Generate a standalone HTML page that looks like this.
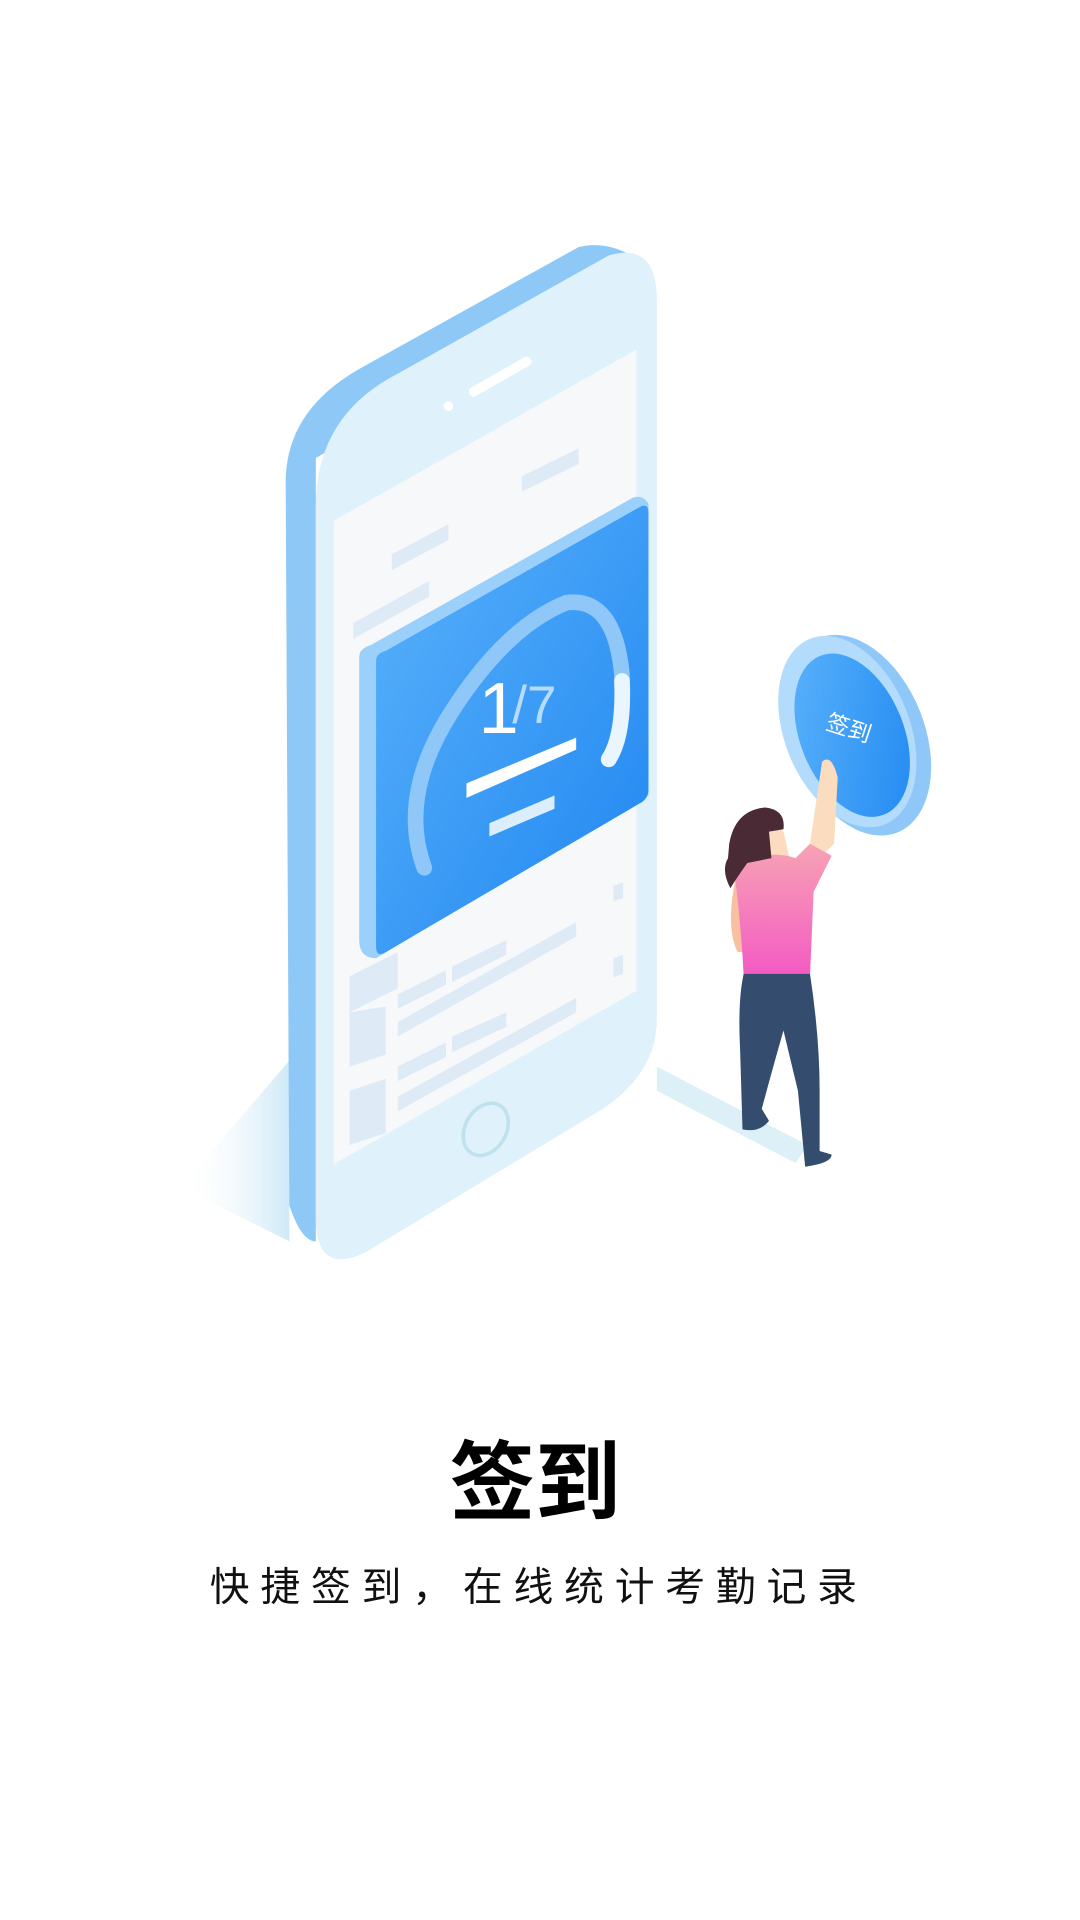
<!DOCTYPE html>
<html><head><meta charset="utf-8"><style>
html,body{margin:0;padding:0;background:#fff;width:1080px;height:1920px;overflow:hidden}
svg{display:block}
</style></head><body>
<svg width="1080" height="1920" viewBox="0 0 896 1593" xmlns="http://www.w3.org/2000/svg">
<defs>
<linearGradient id="card" x1="0" y1="0" x2="1" y2="1"><stop offset="0" stop-color="#5ab2fb"/><stop offset="1" stop-color="#1f86f0"/></linearGradient>
<linearGradient id="btn" x1="0" y1="0" x2="1" y2="1"><stop offset="0" stop-color="#5db4fb"/><stop offset="1" stop-color="#1f88f2"/></linearGradient>
<linearGradient id="shirt" x1="0" y1="0" x2="0" y2="1"><stop offset="0" stop-color="#f7a3b4"/><stop offset="1" stop-color="#f45ac3"/></linearGradient>
<linearGradient id="shadow" x1="1" y1="0" x2="0" y2="0"><stop offset="0" stop-color="#cfe9f7"/><stop offset="1" stop-color="#fff" stop-opacity="0"/></linearGradient>
</defs>
<path d="M240 880 L240 1030 L150 985 Z" fill="url(#shadow)"/>
<path d="M545 885 L670 950 L660 965 L545 905 Z" fill="#d4ecf6" opacity="0.8"/>
<path d="M237 400 Q237 340 300 305 L480 205 Q500 200 520 210 L520 230 L262 380 L262 1030 Q250 1030 240 1000 Z" fill="#8ec8f7"/>
<path d="M262 420 Q262 345 330 310 L505 212 Q545 200 545 250 L545 845 Q545 890 500 920 L305 1038 Q262 1060 262 1010 Z" fill="#dff1fb"/>
<path d="M277 432 L528 290 L528 822 L277 966 Z" fill="#f7f8fa"/>
<path d="M393 325 L437 300" stroke="#fff" stroke-width="8" stroke-linecap="round"/>
<circle cx="372" cy="337" r="4" fill="#fff"/>
<ellipse cx="403" cy="937" rx="17" ry="23" transform="rotate(30 403 937)" fill="none" stroke="#bfe2ef" stroke-width="3"/>
<g fill="#dfeaf7">
<path d="M433 395 L480 372 L480 385 L433 408 Z"/>
<path d="M325 460 L372 435 L372 448 L325 473 Z"/>
<path d="M293 517 L356 482 L356 495 L293 530 Z"/>
<path d="M290 810 L330 790 L330 820 L290 840 Z"/>
<path d="M375 802 L420 780 L420 792 L375 815 Z"/>
<path d="M330 825 L370 805 L370 817 L330 837 Z"/>
<path d="M330 848 L478 765 L478 777 L330 860 Z"/>
<path d="M290 840 L320 835 L320 875 L290 885 Z"/>
<path d="M375 860 L420 840 L420 852 L375 873 Z"/>
<path d="M330 885 L370 865 L370 877 L330 897 Z"/>
<path d="M330 910 L478 828 L478 840 L330 922 Z"/>
<path d="M290 905 L320 895 L320 940 L290 950 Z"/>
<path d="M509 735 L517 732 L517 745 L509 748 Z"/>
<path d="M509 795 L517 792 L517 808 L509 811 Z"/>
</g>
<path d="M298 545 Q298 538 308 535 L525 413 Q533 410 538 418 L538 660 L312 795 Q298 795 298 780 Z" fill="#9bd0fb"/>
<path d="M312 548 Q312 542 320 540 L532 420 Q538 418 538 425 L538 655 Q538 663 530 667 L320 790 Q312 795 312 785 Z" fill="url(#card)"/>
<path d="M352 720 Q330 660 375 590 Q420 520 470 500 Q510 495 516 560 Q518 610 505 630" fill="none" stroke="#8ec7f8" stroke-width="13" stroke-linecap="round"/>
<path d="M516 565 Q518 610 505 630" fill="none" stroke="#eaf6ff" stroke-width="13" stroke-linecap="round"/>
<text x="397" y="608" font-family="Liberation Sans, sans-serif" font-size="60" fill="#fff">1</text>
<text x="425" y="600" font-family="Liberation Sans, sans-serif" font-size="44" fill="#b5dcfb">/7</text>
<path d="M387 650 L478 612 L478 622 L387 662 Z" fill="#fff"/>
<path d="M406 683 L460 660 L460 671 L406 694 Z" fill="#dceefc"/>
<g transform="translate(10 10)">
<ellipse cx="702" cy="600" rx="55" ry="87" transform="rotate(-22 702 600)" fill="#8fc8f8"/>
<ellipse cx="693" cy="597" rx="52" ry="83" transform="rotate(-22 693 597)" fill="#b3dbfb"/>
<ellipse cx="697" cy="600" rx="43" ry="71" transform="rotate(-22 697 600)" fill="url(#btn)"/>
<text x="672" y="600" font-family="'Noto Sans CJK SC', sans-serif" font-size="19" fill="#fff" transform="rotate(18 690 604)">签到</text>
</g>
<path d="M610 730 Q602 770 612 790 L618 790 Z" fill="#f8c0a0"/>
<path d="M682 632 Q690 625 695 645 L692 700 L680 712 L672 700 Z" fill="#fbdcbf"/>
<path d="M632 690 Q640 682 650 690 L655 712 L635 715 Z" fill="#fbdcbf"/>
<path d="M614 715 Q640 705 660 712 L672 700 L690 710 L675 740 L672 810 L617 810 Q615 770 610 730 Z" fill="url(#shirt)"/>
<path d="M617 808 L672 808 Q680 860 680 905 L680 955 L690 958 Q690 965 668 968 L662 905 L650 855 Q640 890 632 920 L638 930 Q630 940 616 937 L614 870 Q612 830 617 808 Z" fill="#344d6e"/>
<path d="M605 700 Q610 672 635 670 Q652 672 650 688 L638 690 L640 712 L620 716 Q610 730 606 737 Q598 722 604 712 Z" fill="#4a2a34"/>
<text x="444" y="1255" text-anchor="middle" font-family="'Noto Sans CJK SC', sans-serif" font-weight="bold" font-size="71" fill="#000">签到</text>
<text x="447" y="1328" text-anchor="middle" font-family="'Noto Sans CJK SC', sans-serif" font-size="33" letter-spacing="9" fill="#111">快捷签到，在线统计考勤记录</text>
</svg>
</body></html>
